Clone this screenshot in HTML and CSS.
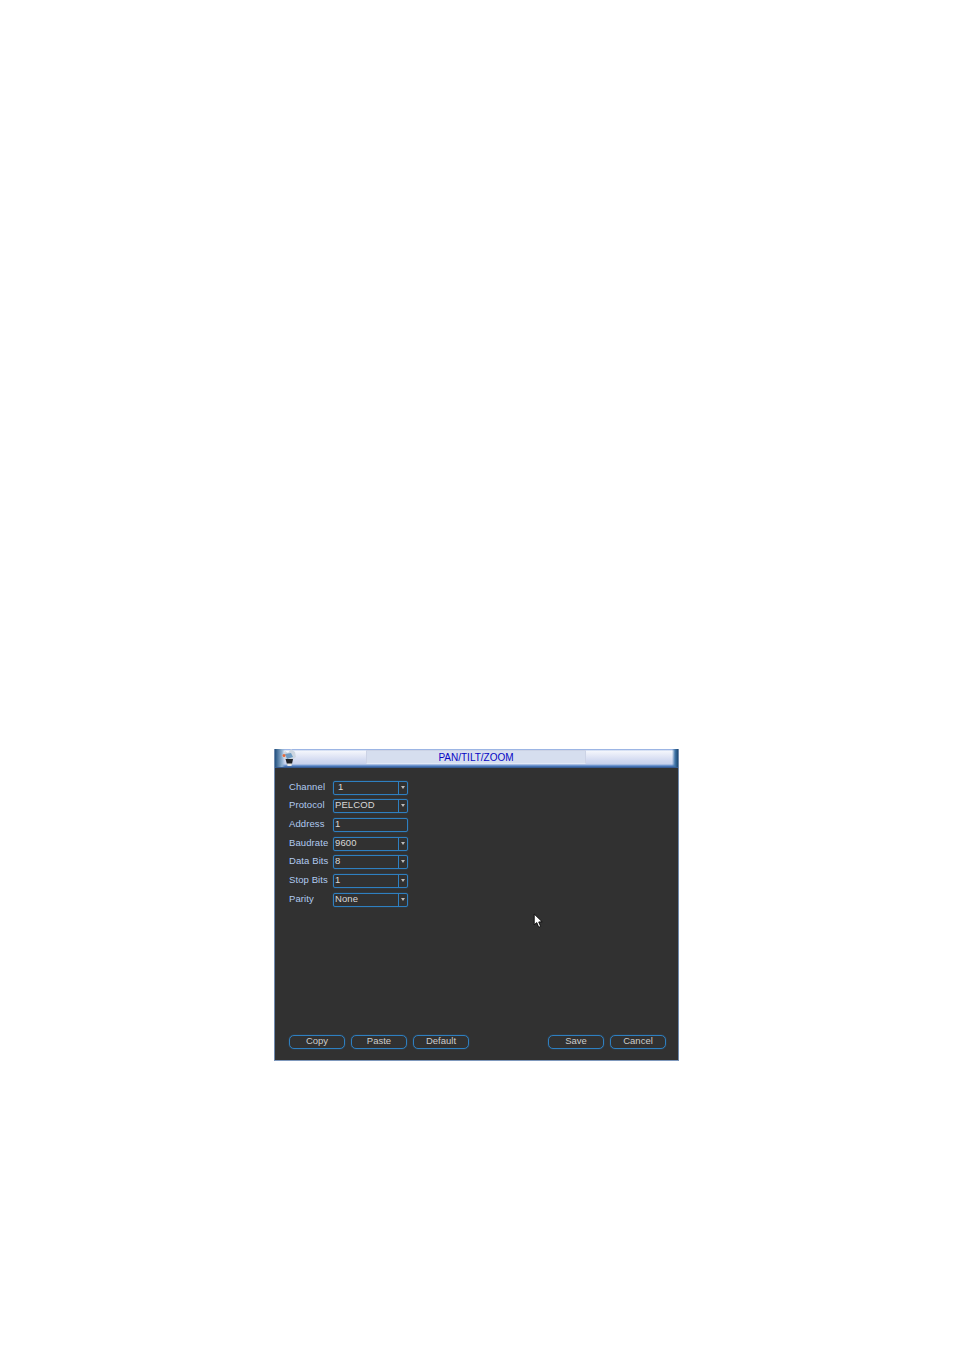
FILE: index.html
```html
<!DOCTYPE html>
<html>
<head>
  <link rel="stylesheet" href="styles.css">
</head>
<body>
  <div class="window">
    <header class="titlebar">
      <div class="corner"></div>
      <svg class="logo" viewBox="0 0 16 18">
        <path d="M1 7 L4 2 L7 4 L10 0 L14 3 L15 8 L12 10 L4 10 Z" fill="#cdd6e0"/>
        <path d="M4 5 L10 4 L12 8 L6 10 Z" fill="#6f9cc4"/>
        <circle cx="3" cy="6.5" r="1.5" fill="#e2683a"/>
        <path d="M4.5 10 L12 10 L11 15 Q8.5 17 6 15 Z" fill="#1f2125"/>
        <path d="M6 14.5 L11 14.5 L10.5 17 L6.5 17 Z" fill="#e8e8e8"/>
      </svg>
      <div class="title">PAN/TILT/ZOOM</div>
      <div class="corner-right"></div>
    </header>

    <div class="content">
      <div class="form">
        <div class="row">
          <span class="label">Channel</span>
          <div class="field"><span class="value indent">1</span><span class="arrow"></span></div>
        </div>
        <div class="row">
          <span class="label">Protocol</span>
          <div class="field"><span class="value">PELCOD</span><span class="arrow"></span></div>
        </div>
        <div class="row">
          <span class="label">Address</span>
          <div class="field"><span class="value">1</span></div>
        </div>
        <div class="row">
          <span class="label">Baudrate</span>
          <div class="field"><span class="value">9600</span><span class="arrow"></span></div>
        </div>
        <div class="row">
          <span class="label">Data Bits</span>
          <div class="field"><span class="value">8</span><span class="arrow"></span></div>
        </div>
        <div class="row">
          <span class="label">Stop Bits</span>
          <div class="field"><span class="value">1</span><span class="arrow"></span></div>
        </div>
        <div class="row">
          <span class="label">Parity</span>
          <div class="field"><span class="value">None</span><span class="arrow"></span></div>
        </div>
      </div>

      <div class="buttons">
        <div class="btn">Copy</div>
        <div class="btn">Paste</div>
        <div class="btn">Default</div>
        <div class="spacer"></div>
        <div class="btn">Save</div>
        <div class="btn">Cancel</div>
      </div>

      <svg class="cursor" viewBox="0 0 10 15">
        <path d="M1 1 L1 11 L3.4 9 L5.2 13.4 L7 12.6 L5.2 8.4 L8.4 8.2 Z" fill="#fff" stroke="#000" stroke-width="0.8"/>
      </svg>
    </div>
  </div>
</body>
</html>
```

FILE: styles.css
```css
* {
  margin: 0;
  padding: 0;
  box-sizing: border-box;
  font-family: "Liberation Sans", Arial, sans-serif;
}

body {
  background: #fff;
  height: 1348px;
  padding: 749px 0 0 274px;
}

.window {
  width: 405px;
  height: 312px;
  display: flex;
  flex-direction: column;
  background: #313131;
  border-left: 1px solid #6f8aae;
  border-right: 1px solid #6f8aae;
  border-bottom: 1px solid #7f98bc;
}

.titlebar {
  position: relative;
  height: 19px;
  display: flex;
  justify-content: center;
  flex-shrink: 0;
  background: linear-gradient(180deg, #7f9fdc 0, #f4f6fc 2px, #d0d8f0 12px, #c8d2ec 15px, #4f7fc4 17px, #2f4f80 19px);
}

.corner {
  position: absolute;
  left: 0;
  top: 0;
  width: 10px;
  height: 18px;
  background: linear-gradient(90deg, #23517f, #8fb0d0 70%, transparent);
}

.corner-right {
  position: absolute;
  right: 0;
  top: 0;
  width: 6px;
  height: 18px;
  background: linear-gradient(90deg, transparent, #3f74a8 50%, #1d4870);
}

.logo {
  position: absolute;
  left: 6px;
  top: 0;
  width: 16px;
  height: 18px;
}

.title {
  width: 220px;
  height: 14px;
  margin: 1px 1px 0 0;
  font-size: 10px;
  line-height: 13px;
  text-align: center;
  color: #0606c4;
  background: #d6deef;
  border: 1px solid #ccd3e6;
  border-bottom-color: #e2e8f6;
  border-radius: 1px;
}

.content {
  position: relative;
  flex: 1;
  display: flex;
  flex-direction: column;
  padding: 12.8px 12px 11px 14px;
}

.form {
  display: flex;
  flex-direction: column;
  gap: 4.65px;
}

.row {
  display: flex;
  height: 14px;
}

.label {
  width: 44px;
  font-size: 9.5px;
  letter-spacing: 0.1px;
  line-height: 11px;
  color: #b0caf0;
}

.field {
  width: 75px;
  height: 14px;
  display: flex;
  border: 1px solid #2e7fc0;
  border-radius: 2px;
  box-shadow: 0 0 1px #2e7fc0;
}

.value {
  flex: 1;
  padding-left: 1px;
  font-size: 9.5px;
  letter-spacing: 0.1px;
  line-height: 10px;
  color: #d8d8d8;
}

.value.indent {
  padding-left: 4px;
}

.arrow {
  position: relative;
  width: 9px;
  border-left: 1px solid #2e7fc0;
}

.arrow::after {
  content: "";
  position: absolute;
  left: 2px;
  top: 4px;
  border-left: 2.5px solid transparent;
  border-right: 2.5px solid transparent;
  border-top: 3px solid #bbb;
}

.buttons {
  margin-top: auto;
  display: flex;
  gap: 6px;
}

.btn {
  width: 56px;
  height: 14px;
  font-size: 9.5px;
  line-height: 10px;
  text-align: center;
  color: #ccc;
  border: 1px solid #2e7fc0;
  border-radius: 5px;
  box-shadow: 0 0 1px #2e7fc0;
}

.spacer {
  flex: 1;
}

.cursor {
  position: absolute;
  left: 258px;
  top: 145px;
  width: 11px;
  height: 16px;
}
```
